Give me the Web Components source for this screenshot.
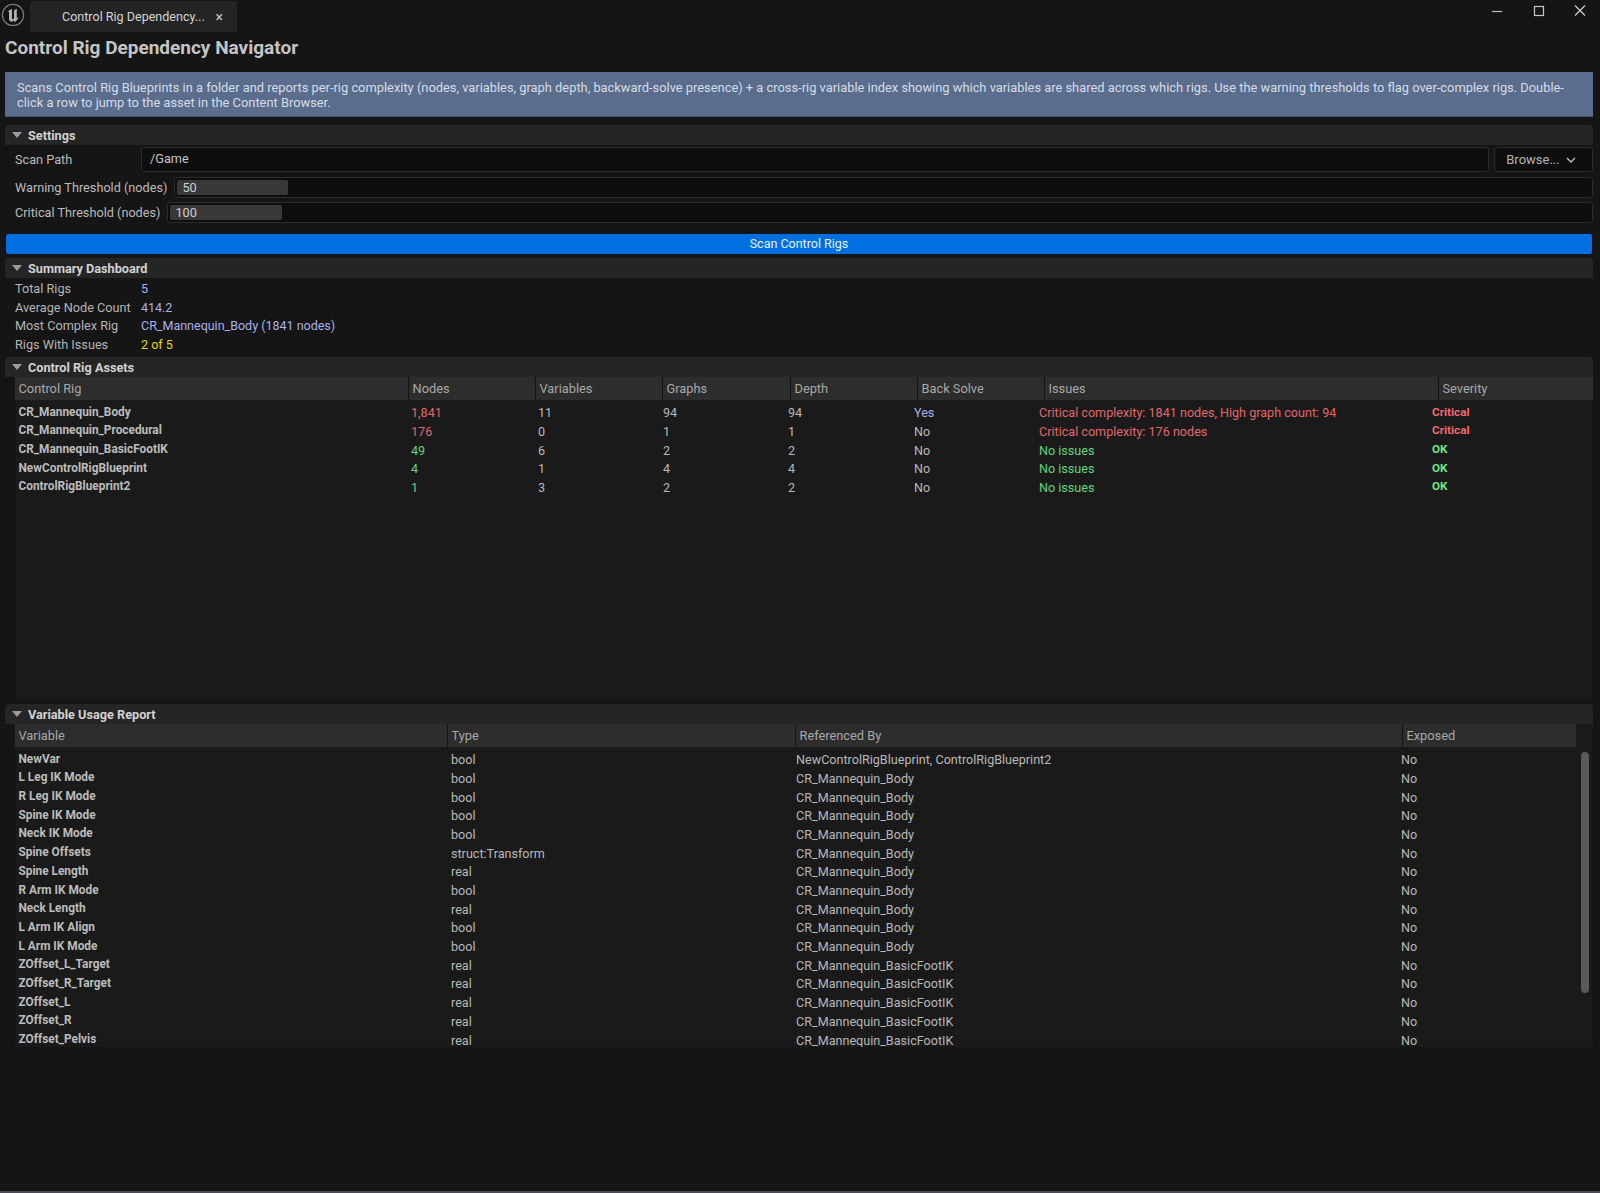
<!DOCTYPE html>
<html>
<head>
<meta charset="utf-8">
<title>Control Rig Dependency Navigator</title>
<style>
    html, body { margin: 0; height: 100%; background: #151515; }
    body { font-family: Roboto, "Liberation Sans", sans-serif; font-size: 12.7px; color: #c0c0c0; overflow: hidden; display: flex; flex-direction: column; }
    .run-btn { margin: 11px 8px 4px 6px; }
    .edge { margin-top: auto; height: 2px; flex: none; background: #4c4c58; }
</style>
</head>
<body>
<ue-titlebar tab="Control Rig Dependency..."></ue-titlebar>
<ue-heading>Control Rig Dependency Navigator</ue-heading>
<ue-banner>Scans Control Rig Blueprints in a folder and reports per-rig complexity (nodes, variables, graph depth, backward-solve presence) + a cross-rig variable index showing which variables are shared across which rigs. Use the warning thresholds to flag over-complex rigs. Double-click a row to jump to the asset in the Content Browser.</ue-banner>

<ue-section label="Settings">
    <ue-path-row label="Scan Path" value="/Game"></ue-path-row>
    <ue-spin-row label="Warning Threshold (nodes)" value="50" fill="111"></ue-spin-row>
    <ue-spin-row label="Critical Threshold (nodes)" value="100" fill="112"></ue-spin-row>
</ue-section>

<ue-button class="run-btn">Scan Control Rigs</ue-button>

<ue-section label="Summary Dashboard">
    <ue-stat label="Total Rigs" value="5" first></ue-stat>
    <ue-stat label="Average Node Count" value="414.2"></ue-stat>
    <ue-stat label="Most Complex Rig" value="CR_Mannequin_Body (1841 nodes)"></ue-stat>
    <ue-stat label="Rigs With Issues" value="2 of 5" tone="warn"></ue-stat>
</ue-section>

<ue-section label="Control Rig Assets" gap="3">
    <ue-table kind="assets"></ue-table>
</ue-section>

<ue-section label="Variable Usage Report" gap="5">
    <ue-table kind="variables"></ue-table>
</ue-section>

<div class="edge"></div>

<script>
class UeTitlebar extends HTMLElement {
    constructor() {
        super();
        this.attachShadow({ mode: 'open' });
    }

    connectedCallback() {
        this.shadowRoot.innerHTML = `
            <style>
                :host { display: flex; height: 33px; flex: none; align-items: flex-start; }
                .logo { width: 24px; height: 24px; margin: 3px 0 0 1px; flex: none; }
                .tab {
                    margin: 1px 0 0 5px;
                    width: 207px;
                    height: 31px;
                    box-sizing: border-box;
                    padding: 0 14px 0 32px;
                    background: #242424;
                    border-radius: 3px 3px 0 0;
                    display: flex;
                    align-items: center;
                    justify-content: space-between;
                    color: #d4d4d4;
                    font-size: 12.55px;
                    white-space: nowrap;
                }
                .x { font-size: 14px; color: #c8c8c8; }
                .win { margin-left: auto; display: flex; }
                .win svg { width: 41px; height: 22px; display: block; }
            </style>
            <svg class="logo" viewBox="0 0 24 24">
                <circle cx="12" cy="12" r="10.6" fill="#111" stroke="#7a7a7a" stroke-width="1.2"/>
                <path d="M6.5 9C7.5 7.6 9 6.6 11 6v9c0 1 .6 1.4 1.4 1l.6-.4V7.4l2.8-2v10l2-1.8c-.6 2.4-2.2 4.4-4 5.6l-1-1.6c-1.2 1.2-3 1.4-4 .4-.6-.6-.8-1.4-.8-2.4V8.4z" fill="#b0b0b0"/>
            </svg>
            <div class="tab"><span>${this.getAttribute('tab')}</span><span class="x">×</span></div>
            <div class="win">
                <svg viewBox="0 0 41 22"><path d="M15 11.5h10" stroke="#bdbdbd" stroke-width="1.2"/></svg>
                <svg viewBox="0 0 41 22"><rect x="16.5" y="6.5" width="9" height="9" fill="none" stroke="#c8c8c8" stroke-width="1.2"/></svg>
                <svg viewBox="0 0 41 22"><path d="M16 5.5l10 10M26 5.5l-10 10" stroke="#d0d0d0" stroke-width="1.2"/></svg>
            </div>
        `;
    }
}

class UeHeading extends HTMLElement {
    constructor() {
        super();
        this.attachShadow({ mode: 'open' });
        this.shadowRoot.innerHTML = `
            <style>
                :host {
                    display: block;
                    flex: none;
                    height: 35px;
                    line-height: 30px;
                    padding-left: 5px;
                    font-size: 19px;
                    font-weight: 700;
                    color: #c4c4c4;
                }
            </style>
            <slot></slot>
        `;
    }
}

class UeBanner extends HTMLElement {
    constructor() {
        super();
        this.attachShadow({ mode: 'open' });
        this.shadowRoot.innerHTML = `
            <style>
                :host {
                    display: block;
                    flex: none;
                    margin: 4px 7px 8px 5px;
                    height: 45px;
                    box-sizing: border-box;
                    padding: 7.5px 12px 0;
                    background: #5a6d8c;
                    border-bottom: 1px solid #46587a;
                    color: #d6dce8;
                    font-size: 12.86px;
                    line-height: 15px;
                }
            </style>
            <slot></slot>
        `;
    }
}

class UeSection extends HTMLElement {
    constructor() {
        super();
        this.attachShadow({ mode: 'open' });
    }

    connectedCallback() {
        this.shadowRoot.innerHTML = `
            <style>
                :host { display: block; flex: none; margin: ${this.getAttribute('gap') || 0}px 7px 0 5px; }
                .head {
                    height: 20px;
                    display: flex;
                    align-items: center;
                    background: #252525;
                    border-radius: 4px 4px 0 0;
                    color: #d2d2d2;
                    font-weight: 700;
                    font-size: 12.7px;
                }
                .arrow { width: 10px; height: 6px; margin: 0 6.5px 0 6.5px; flex: none; }
                .body { padding-left: 10px; }
            </style>
            <div class="head">
                <svg class="arrow" viewBox="0 0 10 6"><path d="M0 0h10L5 6z" fill="#9a9a9a"/></svg>
                <span>${this.getAttribute('label')}</span>
            </div>
            <div class="body"><slot></slot></div>
        `;
    }
}

class UePathRow extends HTMLElement {
    constructor() {
        super();
        this.attachShadow({ mode: 'open' });
    }

    connectedCallback() {
        this.shadowRoot.innerHTML = `
            <style>
                :host { display: flex; height: 25px; margin-top: 2px; align-items: stretch; }
                .label { width: 126px; flex: none; line-height: 25px; color: #bcbcbc; }
                .input {
                    flex: 1;
                    box-sizing: border-box;
                    padding-left: 8px;
                    line-height: 22px;
                    background: #0e0e0e;
                    border: 1px solid #2c2c2c;
                    border-radius: 3px;
                    color: #c4c4c4;
                }
                .browse {
                    width: 99px;
                    margin-left: 5px;
                    padding-right: 5px;
                    box-sizing: border-box;
                    display: flex;
                    align-items: center;
                    justify-content: center;
                    gap: 6px;
                    background: #0e0e0e;
                    border: 1px solid #2c2c2c;
                    border-radius: 3px;
                    color: #b4b4b4;
                    font-size: 13px;
                }
                svg { width: 10px; height: 6px; }
            </style>
            <div class="label">${this.getAttribute('label')}</div>
            <div class="input">${this.getAttribute('value')}</div>
            <div class="browse">Browse...
                <svg viewBox="0 0 10 6"><path d="M1 1l4 4 4-4" fill="none" stroke="#c0c0c0" stroke-width="1.4"/></svg>
            </div>
        `;
    }
}

class UeSpinRow extends HTMLElement {
    constructor() {
        super();
        this.attachShadow({ mode: 'open' });
    }

    connectedCallback() {
        this.shadowRoot.innerHTML = `
            <style>
                :host { display: flex; height: 21px; margin-top: 4.5px; gap: 7px; }
                .label { line-height: 21px; color: #bcbcbc; white-space: nowrap; }
                .spin {
                    flex: 1;
                    box-sizing: border-box;
                    padding: 2px;
                    background: #0e0e0e;
                    border: 1px solid #2c2c2c;
                    border-radius: 3px;
                }
                .fill {
                    height: 100%;
                    box-sizing: border-box;
                    padding-left: 5px;
                    line-height: 15px;
                    background: #383838;
                    border-radius: 2px;
                    color: #d0d0d0;
                }
            </style>
            <div class="label">${this.getAttribute('label')}</div>
            <div class="spin"><div class="fill" style="width:${this.getAttribute('fill')}px">${this.getAttribute('value')}</div></div>
        `;
    }
}

class UeButton extends HTMLElement {
    constructor() {
        super();
        this.attachShadow({ mode: 'open' });
        this.shadowRoot.innerHTML = `
            <style>
                :host {
                    display: block;
                    flex: none;
                    height: 20px;
                    line-height: 20px;
                    text-align: center;
                    background: #0070e0;
                    border-radius: 2px;
                    color: #e8f0fa;
                    font-size: 12.5px;
                }
            </style>
            <slot></slot>
        `;
    }
}

class UeStat extends HTMLElement {
    constructor() {
        super();
        this.attachShadow({ mode: 'open' });
    }

    connectedCallback() {
        const color = this.getAttribute('tone') === 'warn' ? '#e8d800' : '#a9b2ea';
        const top = this.hasAttribute('first') ? 2 : 0;
        this.shadowRoot.innerHTML = `
            <style>
                :host { display: grid; grid-template-columns: 126px 1fr; height: 18.6px; margin-top: ${top}px; line-height: 18.6px; color: #b4b4b4; }
                .value { color: ${color}; font-size: 12.5px; }
            </style>
            <div>${this.getAttribute('label')}</div>
            <div class="value">${this.getAttribute('value')}</div>
        `;
    }
}

const RED = '#e0666a';
const GREEN = '#62d47a';
const TABLES = {
    assets: {
        height: 322,
        headWidths: [394, 127, 127, 128, 127, 127, 394, 154],
        rowCols: '393px 127px 125px 125px 126px 125px 393px 1fr',
        head: ['Control Rig', 'Nodes', 'Variables', 'Graphs', 'Depth', 'Back Solve', 'Issues', 'Severity'],
        rows: [
            ['CR_Mannequin_Body', ['1,841', RED], '11', '94', '94', ['Yes', '#a9b2ea'], ['Critical complexity: 1841 nodes, High graph count: 94', RED], ['Critical', '#f06a6e', 1]],
            ['CR_Mannequin_Procedural', ['176', RED], '0', '1', '1', 'No', ['Critical complexity: 176 nodes', RED], ['Critical', '#f06a6e', 1]],
            ['CR_Mannequin_BasicFootIK', ['49', GREEN], '6', '2', '2', 'No', ['No issues', GREEN], ['OK', '#6ce888', 1]],
            ['NewControlRigBlueprint', ['4', GREEN], '1', '4', '4', 'No', ['No issues', GREEN], ['OK', '#6ce888', 1]],
            ['ControlRigBlueprint2', ['1', GREEN], '3', '2', '2', 'No', ['No issues', GREEN], ['OK', '#6ce888', 1]]
        ]
    },
    variables: {
        height: 323,
        scrollbar: true,
        headWidths: [433, 348, 607, 173],
        rowCols: '433px 345px 605px 1fr',
        head: ['Variable', 'Type', 'Referenced By', 'Exposed'],
        rows: [
            ['NewVar', 'bool', 'NewControlRigBlueprint, ControlRigBlueprint2', 'No'],
            ['L Leg IK Mode', 'bool', 'CR_Mannequin_Body', 'No'],
            ['R Leg IK Mode', 'bool', 'CR_Mannequin_Body', 'No'],
            ['Spine IK Mode', 'bool', 'CR_Mannequin_Body', 'No'],
            ['Neck IK Mode', 'bool', 'CR_Mannequin_Body', 'No'],
            ['Spine Offsets', 'struct:Transform', 'CR_Mannequin_Body', 'No'],
            ['Spine Length', 'real', 'CR_Mannequin_Body', 'No'],
            ['R Arm IK Mode', 'bool', 'CR_Mannequin_Body', 'No'],
            ['Neck Length', 'real', 'CR_Mannequin_Body', 'No'],
            ['L Arm IK Align', 'bool', 'CR_Mannequin_Body', 'No'],
            ['L Arm IK Mode', 'bool', 'CR_Mannequin_Body', 'No'],
            ['ZOffset_L_Target', 'real', 'CR_Mannequin_BasicFootIK', 'No'],
            ['ZOffset_R_Target', 'real', 'CR_Mannequin_BasicFootIK', 'No'],
            ['ZOffset_L', 'real', 'CR_Mannequin_BasicFootIK', 'No'],
            ['ZOffset_R', 'real', 'CR_Mannequin_BasicFootIK', 'No'],
            ['ZOffset_Pelvis', 'real', 'CR_Mannequin_BasicFootIK', 'No']
        ]
    }
};

class UeTable extends HTMLElement {
    constructor() {
        super();
        this.attachShadow({ mode: 'open' });
    }

    cell(value, index) {
        const [text, color, bold] = Array.isArray(value) ? value : [value];
        const cls = index === 0 ? 'name' : bold ? 'strong' : '';
        const style = color ? ` style="color:${color}"` : '';
        return `<div class="${cls}"${style}>${text}</div>`;
    }

    connectedCallback() {
        const table = TABLES[this.getAttribute('kind')];
        const head = table.head.map((text, i) =>
            `<div class="th" style="width:${table.headWidths[i]}px">${text}</div>`).join('');
        const rows = table.rows.map(row =>
            `<div class="row">${row.map((v, i) => this.cell(v, i)).join('')}</div>`).join('');
        this.shadowRoot.innerHTML = `
            <style>
                :host {
                    display: block;
                    position: relative;
                    height: ${table.height}px;
                    overflow: hidden;
                    background: #1a1a1a;
                    font-size: 12.6px;
                }
                .head { display: flex; height: 23px; margin-bottom: 3px; }
                .th {
                    box-sizing: border-box;
                    flex: none;
                    padding-left: 3.5px;
                    line-height: 23px;
                    font-size: 12.8px;
                    background: #2d2d2d;
                    border-right: 1px solid #141414;
                    color: #a8a8a8;
                }
                .th:last-child { border-right: 0; }
                .row {
                    display: grid;
                    grid-template-columns: ${table.rowCols};
                    height: 18.7px;
                    align-items: center;
                    padding-left: 3px;
                    color: #b8b8b8;
                    white-space: nowrap;
                }
                .name, .strong { font-weight: 700; margin-bottom: 2px; font-size: 11.7px; }
                .name { color: #bcbcbc; padding-left: .5px; font-size: 11.85px; }
                .bar {
                    position: absolute;
                    left: 1566px;
                    top: 28px;
                    width: 8px;
                    height: 241px;
                    background: #5a5a5a;
                    border-radius: 4px;
                }
            </style>
            <div class="head">${head}</div>
            ${rows}
            ${table.scrollbar ? '<div class="bar"></div>' : ''}
        `;
    }
}

customElements.define('ue-titlebar', UeTitlebar);
customElements.define('ue-heading', UeHeading);
customElements.define('ue-banner', UeBanner);
customElements.define('ue-section', UeSection);
customElements.define('ue-path-row', UePathRow);
customElements.define('ue-spin-row', UeSpinRow);
customElements.define('ue-button', UeButton);
customElements.define('ue-stat', UeStat);
customElements.define('ue-table', UeTable);
</script>
</body>
</html>
